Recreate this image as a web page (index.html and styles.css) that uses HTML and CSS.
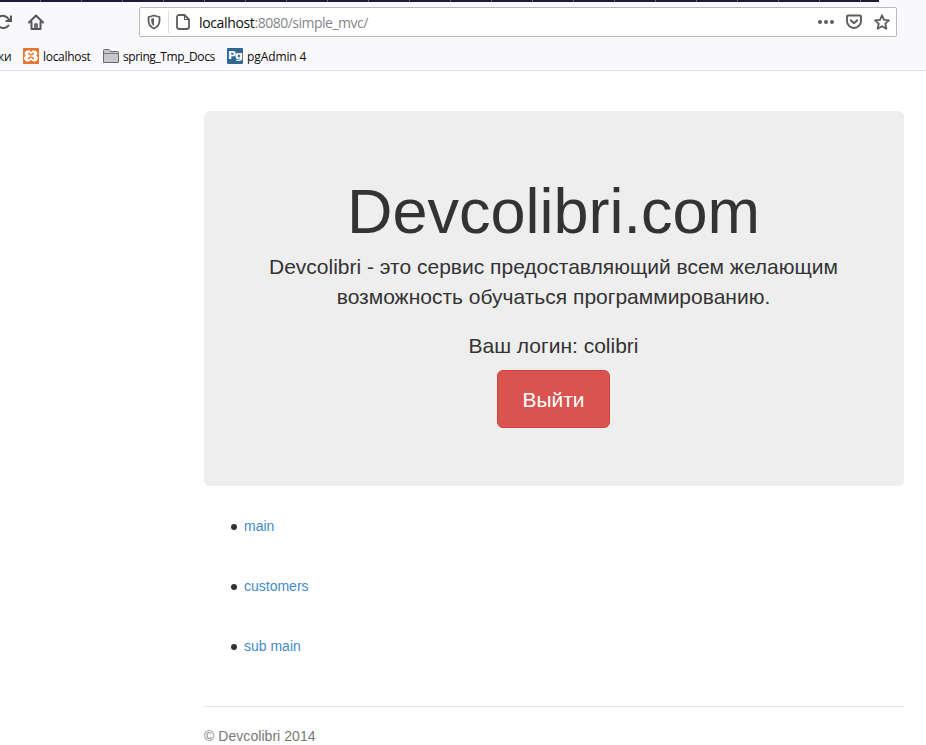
FILE: index.html
```
<!DOCTYPE html>
<html lang="ru">
<head>
<meta charset="utf-8">
<title>Devcolibri.com</title>
<link rel="stylesheet" href="styles.css">
</head>
<body>
<header class="browser">
  <div class="tab-strip"></div>
  <div class="toolbar">
    <svg class="reload" width="12" height="16" viewBox="0 0 12 16" fill="none" stroke="#555559" stroke-width="2"><path d="M-2 3.500C2 .5 7 1.500 9.500 6.500M9 11C6.500 14.500 2 15 -1 12.500"/><path d="M11 1.500V7H5.500"/></svg>
    <svg class="home" width="16" height="16" viewBox="0 0 16 16" fill="none" stroke="#555559" stroke-width="2" stroke-linejoin="round" stroke-linecap="round"><path d="M1 8.500L8 1.500l7 7M3.500 8v7h9V8"/><path d="M7 14v-4h2v4" stroke-width="1.600"/></svg>
    <div class="urlbar">
      <svg class="shield" width="14" height="16" viewBox="0 0 14 16"><path d="M7 1.500L12.500 3v3.500c0 4-2 6.500-5.500 8C3.500 13 1.500 10.500 1.500 6.500V3z" fill="none" stroke="#5c5c60" stroke-width="1.800" stroke-linejoin="round"/><path d="M7 4v8C5 10.600 4.200 9 4.200 6.500V4.800z" fill="#5c5c60"/></svg>
      <span class="divider"></span>
      <svg class="page-icon" width="14" height="16" viewBox="0 0 14 16" fill="none" stroke="#5c5c60" stroke-width="1.800" stroke-linejoin="round"><path d="M3 1h5.500L13 5.500V13a2 2 0 0 1-2 2H3a2 2 0 0 1-2-2V3a2 2 0 0 1 2-2z"/><path d="M8.500 1v4.500H13" stroke-width="1.200"/></svg>
      <span class="address"><b>localhost</b>:8080/simple_mvc/</span>
      <svg class="dots" width="16" height="16" viewBox="0 0 16 16" fill="#5c5c60"><circle cx="2" cy="8" r="2"/><circle cx="8" cy="8" r="2"/><circle cx="14" cy="8" r="2"/></svg>
      <svg class="pocket" width="16" height="16" viewBox="0 0 16 16" fill="none" stroke="#5c5c60" stroke-width="1.900" stroke-linecap="round" stroke-linejoin="round"><path d="M2 1.500h12a1 1 0 0 1 1 1v4.500a7 7 0 0 1-14 0V2.500a1 1 0 0 1 1-1zM4.800 6.200L8 9.200l3.200-3"/></svg>
      <svg class="star" width="16" height="16" viewBox="0 0 16 16" fill="none" stroke="#5c5c60" stroke-width="1.800" stroke-linejoin="round"><path d="M8 1.300l2 4.500 5 .5-3.700 3.400 1.100 5L8 12.200l-4.400 2.500 1.100-5L1 6.300l5-.5z"/></svg>
    </div>
  </div>
  <nav class="bookmarks">
    <span class="cut">ки</span>
    <svg class="bm-icon" width="16" height="16" viewBox="0 0 16 16"><rect width="16" height="16" rx="1" fill="#e5762f"/><path d="M5 2.500h1.500L8 4l1.500-1.500H11a3 3 0 0 1 2.300 5.300A3 3 0 0 1 11 13.300H9.500L8 11.800l-1.500 1.500H5a3 3 0 0 1-2.300-5.500A3 3 0 0 1 5 2.500z" fill="#fff"/><path d="M5 5.500h1l1.200 1.300h1.600L10 5.500h1M5 10.500h1l1.200-1.300h1.600L10 10.500h1" fill="none" stroke="#e5762f" stroke-width="1.300"/></svg>
    <span class="label local">localhost</span>
    <svg class="folder" width="16" height="16" viewBox="0 0 16 16"><path d="M.5 14.500v-12q0-1 1-1h4q1 0 1.500 1l.5 1h7q1 0 1 1v10z" fill="#c8c8ca" stroke="#68686b"/><path d="M1 5.500h14" stroke="#77777a"/></svg>
    <span class="label docs">spring_Tmp_Docs</span>
    <span class="pg">Pg</span>
    <span class="label admin">pgAdmin 4</span>
  </nav>
</header>
<main class="container">
  <section class="jumbotron">
    <h1>Devcolibri.com</h1>
    <p class="lead">Devcolibri - это сервис предоставляющий всем желающим возможность обучаться программированию.</p>
    <p class="login">Ваш логин: colibri</p>
    <a class="btn">Выйти</a>
  </section>
  <ul class="links">
    <li><a>main</a></li>
    <li><a>customers</a></li>
    <li><a>sub main</a></li>
  </ul>
  <footer class="footer">© Devcolibri 2014</footer>
</main>
</body>
</html>
```
FILE: styles.css
```
* { box-sizing: border-box; }
body {
  margin: 0;
  height: 745px;
  overflow: hidden;
  background: #fff;
  color: #333;
  font: 14px/20px "Liberation Sans", Arial, sans-serif;
}
svg { flex: none; display: block; }
.browser {
  height: 71px;
  background: #f9f9fb;
  border-bottom: 1px solid #dfdfe1;
  color: #0c0c0d;
  font-family: "Open Sans", "Noto Sans", sans-serif;
}
.tab-strip {
  width: 879px;
  height: 2px;
  background: repeating-linear-gradient(90deg, #1c1a39 0 40px, #65637c 40px 41px);
}
.toolbar { display: flex; align-items: center; height: 40px; }
.home { margin-left: 16px; }
.urlbar {
  display: flex;
  align-items: center;
  width: 758px;
  height: 30px;
  margin-left: 95px;
  padding: 0 6px 0 7px;
  background: #fff;
  border: 1px solid #b9b9bd;
  border-radius: 2px;
}
.divider { width: 1px; height: 22px; margin: 0 7px; background: #dddde0; }
.address { margin: 2px 0 0 9px; font-size: 14px; letter-spacing: -.5px; color: #85858a; white-space: nowrap; }
.address b { color: #0c0c0d; font-weight: 400; letter-spacing: -.35px; }
.dots { margin-left: auto; }
.pocket { margin-left: 12px; }
.star { margin-left: 12px; }
.bookmarks { display: flex; align-items: center; height: 28px; font-size: 12px; white-space: nowrap; }
.bookmarks span:not(.pg) { padding-top: 2px; }
.cut { width: 23px; margin-left: -2px; letter-spacing: -.3px; }
.bm-icon { margin-left: 2px; }
.label { margin-left: 4px; }
.local { width: 48px; letter-spacing: -.3px; }
.folder { margin-left: 12px; }
.docs { width: 93px; letter-spacing: -.4px; }
.pg {
  width: 16px;
  height: 16px;
  margin-left: 11px;
  border-radius: 1px;
  background: #336791;
  color: #fff;
  font: 700 11px/15px "DejaVu Sans", sans-serif;
  letter-spacing: -1px;
  text-align: center;
}
.admin { letter-spacing: -.1px; }
.container { width: 700px; margin: 40px 0 0 204px; }
.jumbotron {
  height: 375px;
  padding: 66px 60px 0 59px;
  border-radius: 6px;
  background: #eee;
  text-align: center;
  font-size: 21px;
  line-height: 30px;
}
.jumbotron h1 { margin: 0 0 6px; font-size: 63px; line-height: 69px; font-weight: 400; }
.jumbotron p { margin: 0; }
.jumbotron .login { margin: 19px 0 9px; }
.btn {
  display: inline-block;
  width: 113px;
  height: 58px;
  padding-top: 14px;
  border: 1px solid #d43f3a;
  border-radius: 6px;
  background: #d9534f;
  color: #fff;
  vertical-align: top;
}
.links { margin: 30px 0 50px; padding-left: 27px; list-style: none; }
.links li { display: flex; align-items: center; margin-bottom: 40px; }
.links li::before {
  content: "";
  width: 6px;
  height: 6px;
  margin: 2px 7px 0 0;
  border-radius: 50%;
  background: #333;
}
.links li:last-child { margin-bottom: 0; }
.links a { color: #428bca; }
.footer { padding-top: 19px; border-top: 1px solid #e5e5e5; color: #777; letter-spacing: .05px; }
```
